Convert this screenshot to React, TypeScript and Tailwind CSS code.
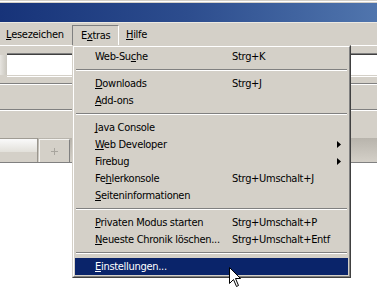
import React from "react";

type Item =
  | { t: "item"; label: string; u?: number; sc?: string; arrow?: boolean; hl?: boolean }
  | { t: "sep" };

const items: Item[] = [
  { t: "item", label: "Web-Suche", u: 6, sc: "Strg+K" },
  { t: "sep" },
  { t: "item", label: "Downloads", u: 0, sc: "Strg+J" },
  { t: "item", label: "Add-ons", u: 0 },
  { t: "sep" },
  { t: "item", label: "Java Console", u: 0 },
  { t: "item", label: "Web Developer", u: 0, arrow: true },
  { t: "item", label: "Firebug", arrow: true },
  { t: "item", label: "Fehlerkonsole", u: 2, sc: "Strg+Umschalt+J" },
  { t: "item", label: "Seiteninformationen", u: 0 },
  { t: "sep" },
  { t: "item", label: "Privaten Modus starten", u: 0, sc: "Strg+Umschalt+P" },
  { t: "item", label: "Neueste Chronik löschen...", u: 0, sc: "Strg+Umschalt+Entf" },
  { t: "sep" },
  { t: "item", label: "Einstellungen...", u: 0, hl: true },
];

function Label({ text, u }: { text: string; u?: number }) {
  if (u === undefined) return <>{text}</>;
  return (
    <>
      {text.slice(0, u)}
      <span className="underline underline-offset-[1px] [text-decoration-skip-ink:none]">{text[u]}</span>
      {text.slice(u + 1)}
    </>
  );
}

export default function App() {
  return (
    <div className="relative w-[377px] h-[288px] overflow-hidden bg-white text-[11px] leading-none tracking-[-0.3px] text-black font-['DejaVu_Sans_Condensed','Liberation_Sans',sans-serif]">
      {/* window frame top */}
      <div className="h-[1px] bg-[#d4d0c8]" />
      <div className="h-[1px] bg-white" />
      <div className="h-[1px] bg-[#d4d0c8]" />
      {/* title bar */}
      <div className="h-[19px] bg-gradient-to-r from-[#173379] via-[#2d4d8e] to-[#5075ad]" />
      <div className="h-[1px] bg-[#ece9e2]" />
      {/* menu bar */}
      <div className="h-[22px] bg-[#d4d0c8] flex items-end">
        <div className="w-[72px] h-[20px] flex items-center pl-[6px] mb-[1px]">
          <Label text="Lesezeichen" u={0} />
        </div>
        <div className="w-[47px] h-[20px] flex items-center pl-[8px] border-t border-l border-t-[#808080] border-l-[#808080] border-r border-r-white">
          <Label text="Extras" u={1} />
        </div>
        <div className="h-[20px] flex items-center pl-[7px] mb-[1px]">
          <Label text="Hilfe" u={0} />
        </div>
      </div>
      <div className="h-[1px] bg-white" />
      {/* navigation toolbar */}
      <div className="h-[37px] bg-[#d4d0c8] flex flex-col">
        <div className="h-[7px]" />
        <div className="flex h-[24px]">
          <div className="w-[7px] h-[20px] mt-[2px] bg-gradient-to-r from-[#e6e4df] to-[#c9c6be]" />
          <div className="flex-1 flex flex-col">
            <div className="h-[1px] bg-[#808080]" />
            <div className="h-[1px] bg-[#404040]" />
            <div className="h-[20px] bg-white" />
            <div className="h-[1px] bg-[#d4d0c8]" />
            <div className="h-[1px] bg-white" />
          </div>
        </div>
      </div>
      <div className="h-[1px] bg-[#808080]" />
      <div className="h-[1px] bg-white" />
      {/* bookmarks toolbar */}
      <div className="h-[24px] bg-[#d4d0c8]" />
      <div className="h-[1px] bg-[#808080]" />
      <div className="h-[1px] bg-white" />
      <div className="h-[27px] bg-[#d4d0c8]" />
      {/* tab strip */}
      <div className="h-[24px] flex bg-gradient-to-b from-[#b8b4ac] to-[#d4d0c8]">
        <div className="w-[38px] flex flex-col border-r border-r-[#9a968e]">
          <div className="h-[1px] bg-[#a09c94]" />
          <div className="h-[13px] bg-gradient-to-b from-[#fafafa] to-[#e2e0da]" />
          <div className="flex-1 bg-[#d4d0c8]" />
        </div>
        <div className="w-[1px]" />
        <div className="w-[31px] mt-[1px] bg-[#d4d0c8] border-t border-l border-t-[#f4f3f0] border-l-[#f4f3f0] border-r border-r-[#808080] flex items-center justify-center">
          <svg width="7" height="7" viewBox="0 0 7 7">
            <rect x="3" y="0" width="1" height="7" fill="#a8a59e" />
            <rect x="0" y="3" width="7" height="1" fill="#a8a59e" />
          </svg>
        </div>
        <div className="flex-1" />
      </div>
      <div className="h-[1px] bg-[#808080]" />

      {/* dropdown menu (overlay) */}
      <div className="absolute left-[72px] top-[45px] w-[279px] border border-t-[#d4d0c8] border-l-[#d4d0c8] border-r-[#404040] border-b-[#404040]">
        <div className="border border-t-white border-l-white border-r-[#808080] border-b-[#808080] bg-[#d4d0c8] p-[1px]">
          {items.map((it, i) =>
            it.t === "sep" ? (
              <div key={i} className="h-[10px] flex items-center px-[1px]">
                <div className="flex-1 h-[2px] border-t border-t-[#808080] border-b border-b-white" />
              </div>
            ) : (
              <div
                key={i}
                className={
                  it.hl
                    ? "h-[17px] flex items-center pl-[20px] bg-[#0a246a] text-white"
                    : "h-[17px] flex items-center pl-[20px]"
                }
              >
                <span className="w-[137px] whitespace-nowrap">
                  <Label text={it.label} u={it.u} />
                </span>
                <span className="flex-1 whitespace-nowrap">{it.sc ?? ""}</span>
                {it.arrow ? (
                  <svg width="4" height="7" viewBox="0 0 4 7" className="mr-[7px]">
                    <path d="M0 0 L4 3.5 L0 7 Z" fill="#000" />
                  </svg>
                ) : null}
              </div>
            )
          )}
        </div>
      </div>

      {/* mouse cursor */}
      <svg className="absolute left-[229px] top-[267px]" width="13" height="21" viewBox="0 0 13 21">
        <path
          d="M0.5 0.5 L0.5 16.5 L4.5 12.5 L7.5 19.5 L9.5 18.5 L6.5 11.5 L11.5 11.5 Z"
          fill="#fff"
          stroke="#000"
          strokeWidth="1"
        />
      </svg>
    </div>
  );
}
